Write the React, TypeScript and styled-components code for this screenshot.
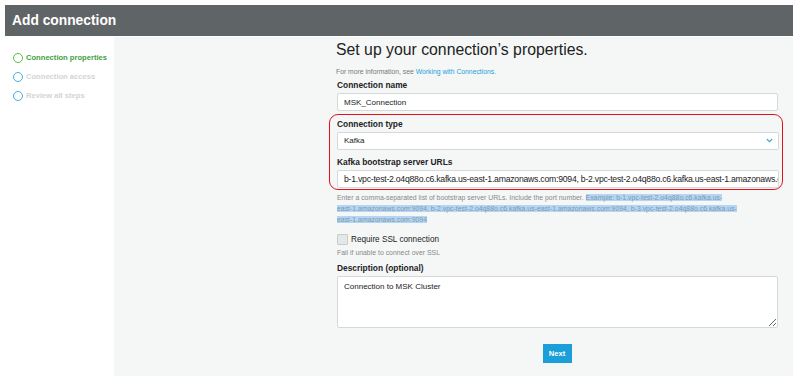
import React from "react";
import styled, { createGlobalStyle } from "styled-components";

const GlobalStyle = createGlobalStyle`
  body {
    margin: 0;
    background: #ffffff;
    font-family: "Liberation Sans", Arial, sans-serif;
  }
`;

const Page = styled.div`
  width: 800px;
  height: 385px;
  padding: 5px 7px 0 5px;
  box-sizing: border-box;
  display: flex;
  flex-direction: column;
`;

const Header = styled.div`
  height: 31px;
  flex-shrink: 0;
  background: #5f6466;
  color: #ffffff;
  font-size: 13.8px;
  font-weight: 700;
  display: flex;
  align-items: center;
  padding-left: 7px;
`;

const Body = styled.div`
  display: flex;
  margin-top: 1px;
  height: 339px;
`;

const Sidebar = styled.div`
  width: 109px;
  flex-shrink: 0;
  padding: 15px 0 0 8px;
  box-sizing: border-box;
  display: flex;
  flex-direction: column;
  gap: 8px;
`;

const Step = styled.div<{ $active?: boolean }>`
  display: flex;
  align-items: center;
  gap: 3px;
  height: 11px;
  font-size: 7.6px;
  font-weight: 700;
  white-space: nowrap;
  color: ${(p) => (p.$active ? "#3ea143" : "#d2d4d5")};
`;

const StepCircle = styled.span<{ $active?: boolean }>`
  width: 8px;
  height: 8px;
  border-radius: 50%;
  border: 1.3px solid ${(p) => (p.$active ? "#5cbc4f" : "#44b0e3")};
  flex-shrink: 0;
`;

const Panel = styled.div`
  flex: 1;
  min-width: 0;
  background: #f5f7f7;
  padding: 4px 15px 0 222px;
  box-sizing: border-box;
  display: flex;
  flex-direction: column;
`;

const Title = styled.h1`
  margin: 0;
  font-size: 15.8px;
  font-weight: 400;
  color: #222;
  line-height: 18px;
`;

const Info = styled.p`
  margin: 9px 0 0 0;
  font-size: 6.8px;
  color: #777;
`;

const Link = styled.a`
  color: #1b9fd8;
  text-decoration: none;
`;

const Label = styled.div`
  font-size: 8.4px;
  font-weight: 700;
  color: #222;
  margin: 0 0 3px 1px;
  line-height: 10px;
`;

const Field = styled.div<{ $top: number }>`
  margin-top: ${(p) => p.$top}px;
`;

const Box = styled.div<{ $big?: boolean }>`
  height: 18px;
  background: #fff;
  border: 1px solid #d5d9da;
  border-radius: 2px;
  display: flex;
  align-items: center;
  padding: 0 6px;
  font-size: ${(p) => (p.$big ? "8.7px" : "8px")};
  letter-spacing: ${(p) => (p.$big ? "-0.25px" : "0")};
  color: #222;
  white-space: nowrap;
  overflow: hidden;
  box-sizing: border-box;
  margin-left: 1px;
`;

const SelectBox = styled(Box)`
  justify-content: space-between;
  padding-right: 5px;
`;

const Highlight = styled.div`
  border: 1.6px solid #e0131a;
  border-radius: 9px;
  margin: 3px -5px 0 -7px;
  padding: 3.5px 3px 1px 6px;
`;

const Help = styled.p`
  margin: 2px 0 0 1px;
  font-size: 6.9px;
  line-height: 11px;
  color: #888;
  width: 430px;
`;

const Selected = styled.span`
  background: #b4d6f4;
  color: #7f99ad;
`;

const CheckRow = styled.label`
  display: flex;
  align-items: center;
  gap: 3px;
  height: 11px;
  margin-top: 9px;
  font-size: 8.2px;
  color: #222;
  margin-left: 1px;
`;

const CheckBox = styled.span`
  width: 9px;
  height: 9px;
  border: 1px solid #c9cccd;
  background: #e6e8e8;
  border-radius: 1px;
`;

const SmallNote = styled.p`
  margin: 4px 0 0 1px;
  font-size: 6.9px;
  line-height: 8px;
  color: #888;
`;

const TextArea = styled.textarea`
  display: block;
  width: 441px;
  height: 52px;
  box-sizing: border-box;
  margin: 0 0 0 1px;
  border: 1px solid #d5d9da;
  border-radius: 2px;
  padding: 5px 6px;
  font-family: "Liberation Sans", Arial, sans-serif;
  font-size: 8px;
  color: #222;
  resize: vertical;
  outline: none;
`;

const Actions = styled.div`
  display: flex;
  justify-content: center;
  margin-top: 16px;
`;

const NextButton = styled.button`
  width: 29px;
  height: 19px;
  background: #1a9fd9;
  border: none;
  color: #fff;
  font-family: "Liberation Sans", Arial, sans-serif;
  font-weight: 700;
  font-size: 7.6px;
  padding: 0;
`;

const Chevron = () => (
  <svg width="7" height="5" viewBox="0 0 7 5">
    <path d="M0.8 1 L3.5 3.7 L6.2 1" fill="none" stroke="#3aa5dc" strokeWidth="1.1" />
  </svg>
);

const steps = ["Connection properties", "Connection access", "Review all steps"];

export default function App() {
  return (
    <>
      <GlobalStyle />
      <Page>
        <Header>Add connection</Header>
        <Body>
          <Sidebar>
            {steps.map((s, i) => (
              <Step key={s} $active={i === 0}>
                <StepCircle $active={i === 0} />
                {s}
              </Step>
            ))}
          </Sidebar>
          <Panel>
            <Title>Set up your connection’s properties.</Title>
            <Info>
              For more information, see <Link>Working with Connections.</Link>
            </Info>
            <Field $top={5}>
              <Label>Connection name</Label>
              <Box>MSK_Connection</Box>
            </Field>
            <Highlight>
              <Label>Connection type</Label>
              <SelectBox>
                Kafka
                <Chevron />
              </SelectBox>
              <Field $top={7}>
                <Label>Kafka bootstrap server URLs</Label>
                <Box $big>
                  b-1.vpc-test-2.o4q88o.c6.kafka.us-east-1.amazonaws.com:9094,
                  b-2.vpc-test-2.o4q88o.c6.kafka.us-east-1.amazonaws.com:9094
                </Box>
              </Field>
            </Highlight>
            <Help>
              Enter a comma-separated list of bootstrap server URLs. Include the
              port number.{" "}
              <Selected>
                Example: b-1.vpc-test-2.o4q88o.c6.kafka.us-
                <br />
                east-1.amazonaws.com:9094,
                b-2.vpc-test-2.o4q88o.c6.kafka.us-east-1.amazonaws.com:9094,
                b-3.vpc-test-2.o4q88o.c6.kafka.us-
                <br />
                east-1.amazonaws.com:9094
              </Selected>
            </Help>
            <CheckRow>
              <CheckBox />
              Require SSL connection
            </CheckRow>
            <SmallNote>Fail if unable to connect over SSL</SmallNote>
            <Field $top={6}>
              <Label>Description (optional)</Label>
              <TextArea defaultValue="Connection to MSK Cluster" spellCheck={false} />
            </Field>
            <Actions>
              <NextButton>Next</NextButton>
            </Actions>
          </Panel>
        </Body>
      </Page>
    </>
  );
}
